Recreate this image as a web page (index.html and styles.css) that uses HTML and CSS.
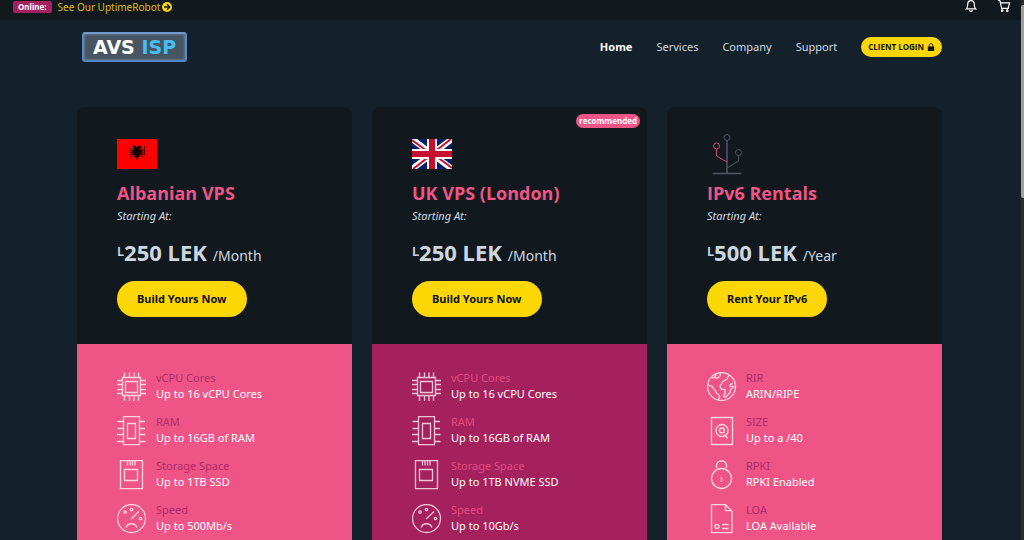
FILE: index.html
```html
<!DOCTYPE html>
<html lang="en">
<head>
<meta charset="utf-8">
<meta name="viewport" content="width=device-width, initial-scale=1">
<title>AVS ISP</title>
<link rel="stylesheet" href="styles.css">
</head>
<body>
<svg class="sprite" aria-hidden="true">
  <symbol id="cpu" viewBox="0 0 30 30"><path d="M5.500 5.500h18v18h-18zM8.500 9.500h12v11h-12zM7.500 5V.5M12.500 5V.5M17 5V.5M21.500 5V.5M7.500 24v5M12.500 24v5M17 24v5M21.500 24v5M5 8.500H0M5 12.500H0M5 17.500H0M5 21.500H0M24 8.500h5M24 12.500h5M24 17.500h5M24 21.500h5"/></symbol>
  <symbol id="ram" viewBox="0 0 30 30"><path d="M6.500.700h16v28h-16zM10.500 7.500h8v15h-8zM6 5.500H.5M6 12.500H.5M6 18.500H0M6 25.500H0M23 5.500h5M23 12.500h5M23 18.500h5.500M23 25.500h5.500"/></symbol>
  <symbol id="disk" viewBox="0 0 30 30"><path d="M3.500.700h22v28h-22zM7.500 9.500h13v11h-13zM10.500 1v4.500M13 1v4.500M15.500 1v4.500M18 1v4.500"/></symbol>
  <symbol id="gauge" viewBox="0 0 30 30"><circle cx="14.500" cy="14.500" r="14"/><circle cx="14.500" cy="5.500" r="1.200"/><circle cx="8" cy="8" r="1.200"/><circle cx="23.500" cy="14.500" r="1.200"/><path d="M14 15l8-7.500M9 23.500c2-5 9-5 11 0"/></symbol>
  <symbol id="globe" viewBox="0 0 30 30"><circle cx="14.500" cy="14.500" r="14"/><path d="M9 2c0 2-1.500 4-4 4M10 1.500C7 4 7 6.500 10 6c3-.5 4-3 3-5M1 12c1 2 2 2 3 2 2 0 2 3 4 4.500s0 2 2 3 3 2 2.500 3.500-1 2-1 3.500M22 3l-2 4-4 2.500-3 4.500 1 3 4 .500 0 4-1.500 3 2 1 2.500-3 2-2 .500-3 3.500-2.500-4-.500c-1-1.500 1-2.500 3-3"/></symbol>
  <symbol id="size" viewBox="0 0 30 30"><path d="M4.500 1.500h21v27h-21zM17.500 18.500l3 4"/><circle cx="15" cy="14.500" r="6"/><circle cx="15" cy="14.500" r="2.500"/></symbol>
  <symbol id="lock" viewBox="0 0 30 30"><circle cx="14.500" cy="18.500" r="10"/><path d="M9.500 8V5.500c0-6 10-6 10 0V8M14.500 17v5"/></symbol>
  <symbol id="doc" viewBox="0 0 30 30"><path d="M4.500.700h14l6.500 6.500v21.500h-20.500zM18.500.700v6h6M15 20.500h6.500M15 24.500h6.500"/><circle cx="10" cy="22.500" r="2"/></symbol>
</svg>
<div class="viewport">
  <div class="page">
    <div class="topbar">
      <div class="status"><span class="tag">Online:</span><a href="#">See Our UptimeRobot
        <svg class="arrow" viewBox="0 0 10 10" aria-hidden="true"><circle cx="5" cy="5" r="5"/><path d="M2 5h5.500M5 2.300L7.700 5 5 7.700"/></svg></a></div>
      <div class="tools">
        <a href="#" aria-label="Notifications"><svg viewBox="0 0 14 14"><path d="M2 9.500h10c-1.500-1.500-1.500-3-1.500-5C10.500 1.800 9 .7 7 .7S3.500 1.800 3.500 4.500c0 2 0 3.500-1.500 5zM5.500 11c.5 1.700 2.500 1.700 3 0"/></svg></a>
        <a href="#" aria-label="Cart"><svg viewBox="0 0 14 14"><path d="M.5.500h2l2 8.500h7l1.500-6H3.300"/><circle cx="5" cy="11.500" r=".8"/><circle cx="10.500" cy="11.500" r=".8"/></svg></a>
      </div>
    </div>
    <header class="header">
      <a class="logo" href="#"><span>AVS</span> <span class="logo-isp">ISP</span></a>
      <nav class="nav">
        <a class="active" href="#">Home</a><a href="#">Services</a><a href="#">Company</a><a href="#">Support</a>
        <a class="login" href="#">CLIENT LOGIN <svg viewBox="0 0 8 8" aria-hidden="true"><path class="body" d="M.8 3.500h6.400V8H.8z"/><path class="shackle" d="M2.300 4V2.300c0-2.200 3.400-2.200 3.400 0V4"/></svg></a>
      </nav>
    </header>
    <main class="plans">
      <article class="card">
        <div class="offer">
          <div class="media"><svg class="flag" viewBox="0 0 40 30" role="img" aria-label="Albania"><path fill="#ff0000" d="M0 0h40v30H0z"/><path fill="#120000" d="M20 9.500l-.5-2-2-1-2.500.5 1.500 1-1.500 1 2.200.5-.700 1.500-2-1 .5 3.500 1.500 2.500 1.500.500-1 2 2-.5.500 2 .5 2.500.5-2.500.5-2 2 .5-1-2 1.500-.500 1.500-2.500.5-3.500-2 1-.700-1.500L25 9l-1.500-1 1.500-1-2.500-.5-2 1z"/><path stroke="#300000" stroke-width=".8" d="M12.500 7v8M27.500 7v8M12 8l3 3M12 10.500l4 2.500M12 13l4 1.500M12 15.500h4M13 18.500l3.500-2M28 8l-3 3M28 10.500L24 13M28 13l-4 1.500M28 15.500h-4M27 18.500l-3.500-2"/></svg></div>
          <h2>Albanian VPS</h2>
          <p class="starting">Starting At:</p>
          <p class="price"><span class="currency">L</span><strong>250 LEK</strong> <span class="period">/Month</span></p>
          <a class="button" href="#">Build Yours Now</a>
        </div>
        <dl class="specs">
          <div class="spec"><svg><use href="#cpu"/></svg><div><dt>vCPU Cores</dt><dd>Up to 16 vCPU Cores</dd></div></div>
          <div class="spec"><svg><use href="#ram"/></svg><div><dt>RAM</dt><dd>Up to 16GB of RAM</dd></div></div>
          <div class="spec"><svg><use href="#disk"/></svg><div><dt>Storage Space</dt><dd>Up to 1TB SSD</dd></div></div>
          <div class="spec"><svg><use href="#gauge"/></svg><div><dt>Speed</dt><dd>Up to 500Mb/s</dd></div></div>
        </dl>
      </article>
      <article class="card featured">
        <span class="badge">recommended</span>
        <div class="offer">
          <div class="media"><svg class="flag" viewBox="0 0 40 30" role="img" aria-label="United Kingdom"><path fill="#012169" d="M0 0h40v30H0z"/><path stroke="#fff" stroke-width="6" d="M0 0l40 30M40 0L0 30"/><path stroke="#c8102e" stroke-width="2" d="M0 1l19 14M21 15l19 14M39 0L21 14M19 16L1 30"/><path stroke="#fff" stroke-width="10" d="M20 0v30M0 15h40"/><path stroke="#c8102e" stroke-width="6" d="M20 0v30M0 15h40"/></svg></div>
          <h2>UK VPS (London)</h2>
          <p class="starting">Starting At:</p>
          <p class="price"><span class="currency">L</span><strong>250 LEK</strong> <span class="period">/Month</span></p>
          <a class="button" href="#">Build Yours Now</a>
        </div>
        <dl class="specs">
          <div class="spec"><svg><use href="#cpu"/></svg><div><dt>vCPU Cores</dt><dd>Up to 16 vCPU Cores</dd></div></div>
          <div class="spec"><svg><use href="#ram"/></svg><div><dt>RAM</dt><dd>Up to 16GB of RAM</dd></div></div>
          <div class="spec"><svg><use href="#disk"/></svg><div><dt>Storage Space</dt><dd>Up to 1TB NVME SSD</dd></div></div>
          <div class="spec"><svg><use href="#gauge"/></svg><div><dt>Speed</dt><dd>Up to 10Gb/s</dd></div></div>
        </dl>
      </article>
      <article class="card">
        <div class="offer">
          <div class="media"><svg class="tree" viewBox="0 0 40 42" aria-hidden="true"><g stroke="#4d5864"><path stroke-width="1.500" d="M20 7.500V40M5.500 40.500h29"/><path d="M31.500 22v6L20 35"/><circle cx="20" cy="4.500" r="3"/><circle cx="31.500" cy="19.500" r="3"/></g><g stroke="#d04a78"><circle cx="9.500" cy="13" r="3"/><path d="M9.500 16v7L20 29"/></g></svg></div>
          <h2>IPv6 Rentals</h2>
          <p class="starting">Starting At:</p>
          <p class="price"><span class="currency">L</span><strong>500 LEK</strong> <span class="period">/Year</span></p>
          <a class="button" href="#">Rent Your IPv6</a>
        </div>
        <dl class="specs">
          <div class="spec"><svg><use href="#globe"/></svg><div><dt>RIR</dt><dd>ARIN/RIPE</dd></div></div>
          <div class="spec"><svg><use href="#size"/></svg><div><dt>SIZE</dt><dd>Up to a /40</dd></div></div>
          <div class="spec"><svg><use href="#lock"/></svg><div><dt>RPKI</dt><dd>RPKI Enabled</dd></div></div>
          <div class="spec"><svg><use href="#doc"/></svg><div><dt>LOA</dt><dd>LOA Available</dd></div></div>
        </dl>
      </article>
    </main>
  </div>
  <div class="rail" aria-hidden="true"><div class="thumb"></div></div>
</div>
</body>
</html>
```
FILE: styles.css
```css
* { box-sizing: border-box; margin: 0; }
body {
  background: #15212a;
  color: #ced7e0;
  font-family: "Noto Sans", "Open Sans", sans-serif;
  font-size: 11px;
  line-height: 16px;
}
a { color: inherit; text-decoration: none; }
svg { display: block; fill: none; stroke: currentColor; }
.sprite { position: absolute; width: 0; height: 0; }
.viewport { display: flex; height: 100vh; overflow: hidden; }
.page { flex: 1; min-width: 0; }
.rail { width: 3px; padding-top: 5px; background: #2b2b2b; }
.thumb { height: 36%; border-radius: 2px 0 0 2px; background: #9f9f9f; }

.topbar {
  display: flex;
  justify-content: space-between;
  height: 20px;
  padding: 0 10px 0 13px;
  background: #11191f;
}
.status { display: flex; align-items: flex-start; gap: 6px; color: #dabb0b; font-size: 10px; line-height: 14px; }
.status a { display: flex; align-items: center; gap: 2px; }
.tag { margin-top: 1px; padding: 0 5px; border-radius: 2px; background: #a4215e; color: #fff; font-size: 8px; font-weight: 700; line-height: 12px; }
.arrow { width: 10px; height: 10px; fill: #fcd703; stroke: none; }
.arrow path { fill: none; stroke: #11191f; stroke-width: 1.5; }
.tools { display: flex; gap: 19px; color: #fff; }
.tools svg { width: 14px; height: 13px; stroke-width: 1.3; }

.header, .plans { margin: 0 79px 0 77px; }
.header { display: flex; align-items: center; justify-content: space-between; height: 53px; margin-bottom: 34px; padding-left: 5px; }
.logo {
  padding: 0 9px;
  border: 2px solid #5687c6;
  border-top-color: #7199cb;
  border-radius: 3px;
  background: #465561;
  box-shadow: inset 0 0 3px #7893b5;
  color: #fff;
  font-family: "DejaVu Sans", sans-serif;
  font-size: 19px;
  font-weight: 700;
  line-height: 26px;
}
.logo-isp { color: #48bdf2; }
.nav { display: flex; align-items: center; gap: 24px; }
.nav .active { color: #fff; font-weight: 700; }
.login { display: flex; align-items: center; gap: 3px; padding: 0 7px; border-radius: 10px; background: #fcd703; color: #111; font-family: "Open Sans", sans-serif; font-size: 8px; font-weight: 700; line-height: 20px; }
.login svg { width: 8px; height: 8px; }
.login .body { fill: #111; stroke: none; }

.plans { display: grid; grid-template-columns: repeat(3, 1fr); gap: 20px; }
.card { position: relative; overflow: hidden; border-radius: 8px; background: #11191f; }
.badge { position: absolute; top: 7px; right: 7px; padding: 0 3px; border-radius: 7px; background: #ee5586; color: #fff; font-family: "Open Sans", sans-serif; font-size: 8px; font-weight: 700; line-height: 14px; }
.offer { padding: 26px 40px 27px; }
.media { display: flex; align-items: center; height: 42px; }
.flag { width: 40px; height: 30px; stroke: none; }
.tree { width: 40px; height: 42px; }
h2 { margin-top: 6px; color: #ee5586; font-family: "Open Sans", sans-serif; font-size: 18px; font-weight: 700; line-height: 24px; }
.starting { margin-top: 3px; font-style: italic; }
.price { display: flex; align-items: baseline; height: 30px; margin-top: 14px; line-height: 28px; }
.price .currency { align-self: flex-start; font-size: 13px; font-weight: 600; line-height: 26px; }
.price strong { margin-right: 6px; font-size: 22px; }
.period { font-size: 14px; }
.button { display: inline-block; margin-top: 13px; padding: 0 20px; border-radius: 18px; background: #fcd703; color: #111; font-weight: 700; line-height: 36px; vertical-align: top; }
.specs { display: grid; gap: 12px; padding: 26px 40px 40px; background: #ee5586; }
.spec { display: flex; gap: 9px; }
.spec svg { width: 30px; height: 30px; margin-top: 2px; color: #ffd4e2; stroke-width: 1.3; }
dt { color: #b02c68; }
dd { color: #fff; }
.featured .specs { background: #a4215e; }
.featured dt { color: #e14c80; }
.featured .spec svg { color: #efc6d9; }
```
